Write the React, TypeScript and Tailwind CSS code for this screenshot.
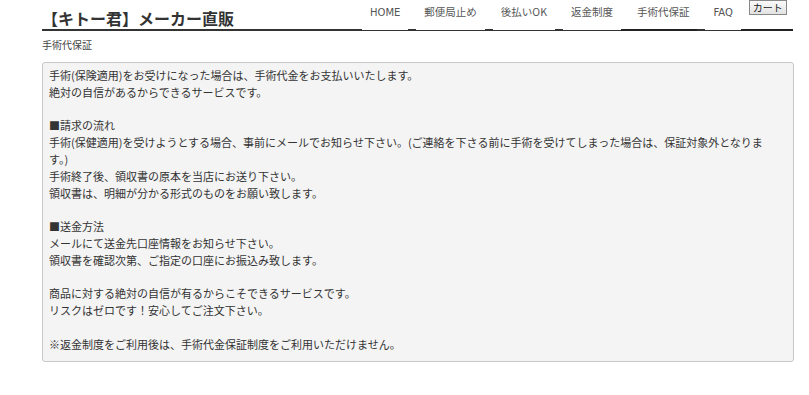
const jp = '"Noto Sans CJK JP", "Noto Sans", sans-serif';
const latin = '"DejaVu Sans", "Noto Sans CJK JP", sans-serif';

type NavItem = { label: string; active?: boolean; latin?: boolean };

const navItems: NavItem[] = [
    { label: 'HOME', latin: true },
    { label: '郵便局止め' },
    { label: '後払いOK' },
    { label: '返金制度' },
    { label: '手術代保証', active: true },
    { label: 'FAQ', latin: true },
];

const lines: string[] = [
    '手術(保険適用)をお受けになった場合は、手術代金をお支払いいたします。',
    '絶対の自信があるからできるサービスです。',
    '',
    '■請求の流れ',
    '手術(保健適用)を受けようとする場合、事前にメールでお知らせ下さい。(ご連絡を下さる前に手術を受けてしまった場合は、保証対象外となりま',
    'す。)',
    '手術終了後、領収書の原本を当店にお送り下さい。',
    '領収書は、明細が分かる形式のものをお願い致します。',
    '',
    '■送金方法',
    'メールにて送金先口座情報をお知らせ下さい。',
    '領収書を確認次第、ご指定の口座にお振込み致します。',
    '',
    '商品に対する絶対の自信が有るからこそできるサービスです。',
    'リスクはゼロです！安心してご注文下さい。',
    '',
    '※返金制度をご利用後は、手術代金保証制度をご利用いただけません。',
];

function Separator({ thick }: { thick?: boolean }) {
    return (
        <div
            className={
                thick
                    ? 'h-full w-[8px] shrink-0 border-b-2 border-[#222]'
                    : 'h-full w-[8px] shrink-0 border-b-2 border-[#333]'
            }
        />
    );
}

export default function App() {
    return (
        <div className="h-[395px] w-[809px] bg-white pl-[42px] text-[#333]" style={{ fontFamily: jp }}>
            {/* header */}
            <div className="flex h-[31px] w-[751px] items-stretch">
                <div className="flex w-[320px] shrink-0 items-end border-b-2 border-[#333] pb-[1px]">
                    <h1 className="text-[16px] leading-[20px] font-bold text-[#333]">
                        【キトー君】メーカー直販
                    </h1>
                </div>
                <nav className="flex flex-1 items-stretch">
                    {navItems.map((item, i) => (
                        <div key={item.label} className="flex h-full shrink-0 items-stretch">
                            {i > 0 && <Separator thick={item.active} />}
                            <div
                                className={
                                    item.active
                                        ? 'h-full border-b-2 border-[#222] px-[8px] pt-[4px]'
                                        : 'h-full border-b border-[#333] px-[8px] pt-[4px]'
                                }
                            >
                                {item.latin ? (
                                    <span
                                        className="block pt-[1px] text-[10px] leading-[16px] whitespace-nowrap text-[#555]"
                                        style={{ fontFamily: latin }}
                                    >
                                        {item.label}
                                    </span>
                                ) : (
                                    <span className="block text-[10.5px] leading-[16px] whitespace-nowrap text-[#555]">
                                        {item.label}
                                    </span>
                                )}
                            </div>
                        </div>
                    ))}
                    <div className="flex h-full flex-1 border-b-2 border-[#222] pl-[8px]">
                        <button className="h-[15px] w-[38px] border border-[#888] bg-[linear-gradient(#fafafa,#e2e2e2)] text-[10px] leading-[12px] text-[#222]">
                            カート
                        </button>
                    </div>
                </nav>
            </div>

            {/* breadcrumb */}
            <p className="mt-[7px] text-[10px] leading-[14px] text-[#444]">手術代保証</p>

            {/* body */}
            <div className="mt-[10px] w-[752px] rounded-[3px] border border-[#c9c9c9] bg-[#f4f4f4] pt-[4px] pr-[6px] pb-[8px] pl-[6px]">
                {lines.map((line, i) => (
                    <div key={i} className="h-[16.8px] text-[11px] leading-[16.8px] whitespace-nowrap text-[#333]">
                        {line}
                    </div>
                ))}
            </div>
        </div>
    );
}
